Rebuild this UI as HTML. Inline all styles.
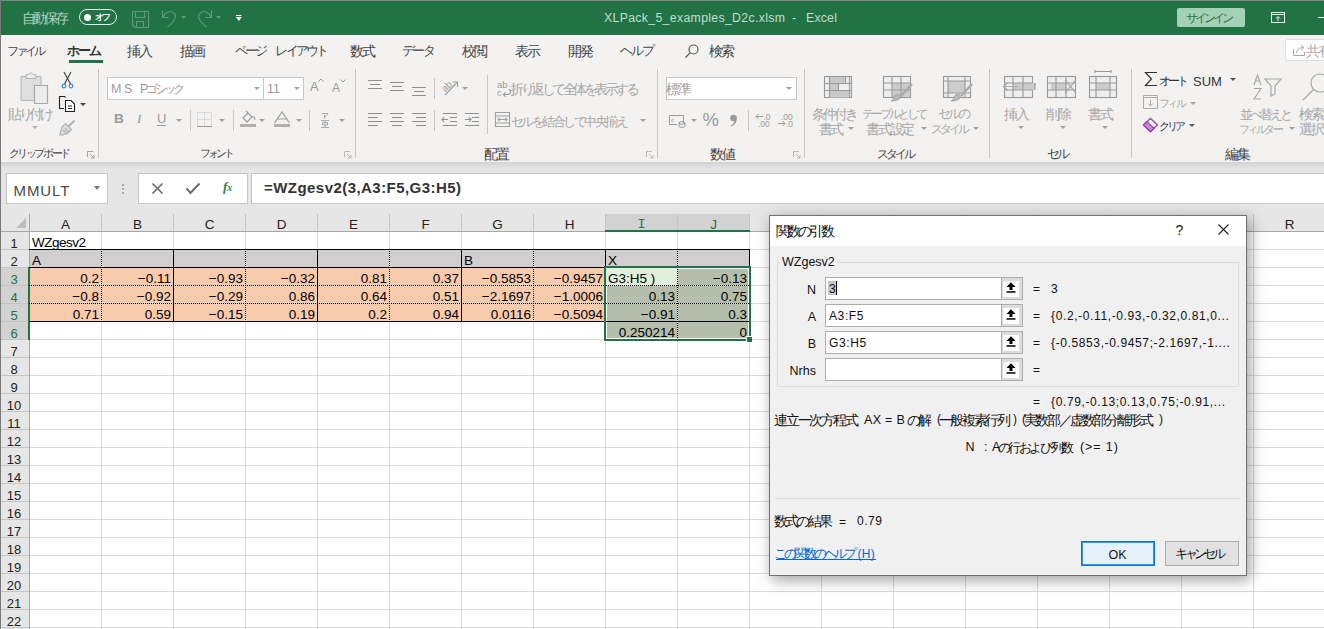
<!DOCTYPE html>
<html><head><meta charset="utf-8">
<style>
*{box-sizing:border-box;}
html,body{margin:0;padding:0;}
body{width:1324px;height:629px;overflow:hidden;position:relative;background:#fff;font-family:"Liberation Sans",sans-serif;}
.a{position:absolute;white-space:nowrap;}
.t{position:absolute;white-space:nowrap;line-height:1;}
#title{left:0;top:0;width:1324px;height:35px;background:#217346;}
#tabs{left:0;top:35px;width:1324px;height:127px;background:#f3f2f1;}
.tab{position:absolute;top:44px;font-size:12.5px;color:#444;line-height:14px;}
.gl{position:absolute;top:147px;font-size:12px;color:#444;line-height:13px;}
.sep{position:absolute;width:1px;background:#c8c6c4;}
.dl{position:absolute;top:151px;width:7px;height:7px;border-left:1px solid #b0b0b0;border-top:1px solid #b0b0b0;}
.rt{position:absolute;font-size:12px;color:#a6a6a6;line-height:13px;}
.ar{position:absolute;width:0;height:0;border-left:3px solid transparent;border-right:3px solid transparent;border-top:3px solid #a0a0a0;}
#fbar{left:0;top:162px;width:1324px;height:52px;background:#e6e6e6;}
.hdr{position:absolute;background:#e6e6e6;}
.ch{position:absolute;top:214px;height:17px;font-size:13.5px;color:#333;text-align:center;line-height:15px;}
.rh{position:absolute;left:0px;width:28px;height:15px;font-size:13px;color:#333;text-align:center;line-height:15px;}
.vl{position:absolute;width:1px;background:#d9d9d9;}
.hl{position:absolute;height:1px;background:#d9d9d9;}
.c{position:absolute;height:17px;font-size:13.5px;line-height:19px;color:#000;}
.n{text-align:right;padding-right:2px;}
.dlg{font-size:12px;color:#111;}
.jc{display:inline-flex;justify-content:center;}
</style></head><body>
<!-- window border -->
<div class="a" style="left:0;top:0;width:1324px;height:1px;background:#858585;z-index:50"></div>
<div class="a" style="left:0;top:0;width:1px;height:629px;background:#7a7a7a;z-index:50"></div>

<!--TOP-->
<div class="a" id="title"></div>
<div class="t" style="left:23px;top:10.5px;font-size:14px;color:#b3d1bd;"><span class="jc" style="width:11.25px">自</span><span class="jc" style="width:11.25px">動</span><span class="jc" style="width:11.25px">保</span><span class="jc" style="width:11.25px">存</span></div>
<div class="a" style="left:79px;top:9px;width:38px;height:16px;border:1.5px solid #e9f1ec;border-radius:8px;"></div>
<div class="a" style="left:84px;top:14px;width:7px;height:7px;border-radius:50%;background:#fff;"></div>
<div class="t" style="left:96px;top:13.0px;font-size:9px;color:#fff;font-weight:bold;"><span class="jc" style="width:6.75px">オ</span><span class="jc" style="width:6.75px">フ</span></div>
<svg class="a" style="left:131px;top:10px" width="19" height="19" viewBox="0 0 19 19" fill="none" stroke="#5f9c77" stroke-width="1.1">
 <path d="M1.5 1.5H17.5V17.5H4L1.5 15Z"/><path d="M4.5 1.5V7.5H13.5V1.5"/><path d="M5.5 17.5V11.5H12.5V17.5"/></svg>
<svg class="a" style="left:160px;top:9px" width="30" height="20" viewBox="0 0 30 20" fill="none" stroke="#5f9c77" stroke-width="1.1">
 <path d="M2.5 1.5V8.5H8.5"/><path d="M2.8 8.2C5.5 3 10.5 1 13.8 4C17 7 15.5 12 7.5 18"/><path d="M21 7H26L23.5 10Z" fill="#5f9c77" stroke="none"/></svg>
<svg class="a" style="left:196px;top:9px" width="30" height="20" viewBox="0 0 30 20" fill="none" stroke="#5f9c77" stroke-width="1.1">
 <path d="M15.5 1.5V8.5H9.5"/><path d="M15.2 8.2C12.5 3 7.5 1 4.2 4C1 7 2.5 12 10.5 18"/><path d="M20 7H25L22.5 10Z" fill="#5f9c77" stroke="none"/></svg>
<svg class="a" style="left:235px;top:14px" width="8" height="8" viewBox="0 0 8 8"><rect x="1" y="1" width="5.5" height="1.1" fill="#fff"/><path d="M0.8 3H6.8L3.8 7Z" fill="#fff"/></svg>
<div class="t" style="left:604px;top:11.5px;font-size:12.3px;color:#c2dfcc;letter-spacing:0.32px;">XLPack_5_examples_D2c.xlsm</div>
<div class="t" style="left:792px;top:11.5px;font-size:12.3px;color:#c2dfcc;">-</div>
<div class="t" style="left:806px;top:11.5px;font-size:12.3px;color:#c2dfcc;letter-spacing:0.2px;">Excel</div>
<div class="a" style="left:1177px;top:8px;width:68px;height:19px;background:#a3d1b5;border-radius:2px;"></div>
<div class="t" style="left:1187px;top:12.0px;font-size:12px;color:#2f6e47;"><span class="jc" style="width:9.00px">サ</span><span class="jc" style="width:9.00px">イ</span><span class="jc" style="width:9.00px">ン</span><span class="jc" style="width:9.00px">イ</span><span class="jc" style="width:9.00px">ン</span></div>
<svg class="a" style="left:1270px;top:11px" width="16" height="13" viewBox="0 0 16 13" fill="none" stroke="#e4efe8" stroke-width="1">
 <rect x="1.5" y="1.5" width="13" height="10"/><path d="M1.5 3.5H14.5"/><path d="M8 10V5.5M6 7.5L8 5.5L10 7.5"/></svg>
<div class="a" style="left:1318px;top:17px;width:6px;height:1px;background:#e4efe8;"></div>
<div class="a" id="tabs"></div>
<div class="t" style="left:8px;top:44.5px;font-size:12px;color:#444;"><span class="jc" style="width:9.00px">フ</span><span class="jc" style="width:9.00px">ァ</span><span class="jc" style="width:9.00px">イ</span><span class="jc" style="width:9.00px">ル</span></div>
<div class="t" style="left:128px;top:43.5px;font-size:14px;color:#444;"><span class="jc" style="width:12.00px">挿</span><span class="jc" style="width:12.00px">入</span></div>
<div class="t" style="left:181px;top:43.5px;font-size:14px;color:#444;"><span class="jc" style="width:12.00px">描</span><span class="jc" style="width:12.00px">画</span></div>
<div class="t" style="left:236px;top:44.0px;font-size:13px;color:#444;"><span class="jc" style="width:10.20px">ペ</span><span class="jc" style="width:10.20px">ー</span><span class="jc" style="width:10.20px">ジ</span><span class="jc" style="width:10.20px"> </span><span class="jc" style="width:10.20px">レ</span><span class="jc" style="width:10.20px">イ</span><span class="jc" style="width:10.20px">ア</span><span class="jc" style="width:10.20px">ウ</span><span class="jc" style="width:10.20px">ト</span></div>
<div class="t" style="left:351px;top:43.5px;font-size:14px;color:#444;"><span class="jc" style="width:12.00px">数</span><span class="jc" style="width:12.00px">式</span></div>
<div class="t" style="left:403px;top:44.0px;font-size:13px;color:#444;"><span class="jc" style="width:10.50px">デ</span><span class="jc" style="width:10.50px">ー</span><span class="jc" style="width:10.50px">タ</span></div>
<div class="t" style="left:463px;top:43.5px;font-size:14px;color:#444;"><span class="jc" style="width:12.00px">校</span><span class="jc" style="width:12.00px">閲</span></div>
<div class="t" style="left:516px;top:43.5px;font-size:14px;color:#444;"><span class="jc" style="width:12.00px">表</span><span class="jc" style="width:12.00px">示</span></div>
<div class="t" style="left:569px;top:43.5px;font-size:14px;color:#444;"><span class="jc" style="width:12.00px">開</span><span class="jc" style="width:12.00px">発</span></div>
<div class="t" style="left:621px;top:44.0px;font-size:13px;color:#444;"><span class="jc" style="width:10.88px">ヘ</span><span class="jc" style="width:10.88px">ル</span><span class="jc" style="width:10.88px">プ</span></div>
<div class="t" style="left:710px;top:43.5px;font-size:14px;color:#444;"><span class="jc" style="width:12.00px">検</span><span class="jc" style="width:12.00px">索</span></div>
<div class="t" style="left:68px;top:44.0px;font-size:13px;color:#333;font-weight:bold;"><span class="jc" style="width:10.88px">ホ</span><span class="jc" style="width:10.88px">ー</span><span class="jc" style="width:10.88px">ム</span></div>
<div class="a" style="left:69px;top:60px;width:34px;height:3px;background:#217346;"></div>
<svg class="a" style="left:684px;top:43px" width="16" height="16" viewBox="0 0 16 16" fill="none" stroke="#555" stroke-width="1.2"><circle cx="9.5" cy="6.5" r="4.5"/><path d="M6.3 9.7L1.5 14.5"/></svg>
<div class="a" style="left:1285px;top:39px;width:45px;height:22px;background:#fff;border:1px solid #e1dfdd;border-radius:2px;"></div>
<svg class="a" style="left:1292px;top:43px" width="15" height="14" viewBox="0 0 15 14" fill="none" stroke="#a8a8a8" stroke-width="1"><path d="M1.5 6V12.5H12.5V9"/><path d="M4.5 10C5 6 8 4.5 11 4.5"/><path d="M9 2L12 4.5L9 7"/></svg>
<div class="t" style="left:1307px;top:43.5px;font-size:14px;color:#a8a8a8;"><span class="jc" style="width:12.00px">共</span><span class="jc" style="width:12.00px">有</span></div>
<div class="sep" style="left:98px;top:69px;height:89px;"></div>
<div class="sep" style="left:355px;top:69px;height:89px;"></div>
<div class="sep" style="left:657px;top:69px;height:89px;"></div>
<div class="sep" style="left:804px;top:69px;height:89px;"></div>
<div class="sep" style="left:989px;top:69px;height:89px;"></div>
<div class="sep" style="left:1131px;top:69px;height:89px;"></div>
<div class="t" style="left:10px;top:147.8px;font-size:11.4px;color:#444;"><span class="jc" style="width:8.55px">ク</span><span class="jc" style="width:8.55px">リ</span><span class="jc" style="width:8.55px">ッ</span><span class="jc" style="width:8.55px">プ</span><span class="jc" style="width:8.55px">ボ</span><span class="jc" style="width:8.55px">ー</span><span class="jc" style="width:8.55px">ド</span></div>
<div class="t" style="left:201px;top:148.0px;font-size:11px;color:#444;"><span class="jc" style="width:8.25px">フ</span><span class="jc" style="width:8.25px">ォ</span><span class="jc" style="width:8.25px">ン</span><span class="jc" style="width:8.25px">ト</span></div>
<div class="t" style="left:485px;top:146.5px;font-size:14px;color:#444;"><span class="jc" style="width:12.00px">配</span><span class="jc" style="width:12.00px">置</span></div>
<div class="t" style="left:711px;top:146.5px;font-size:14px;color:#444;"><span class="jc" style="width:12.00px">数</span><span class="jc" style="width:12.00px">値</span></div>
<div class="t" style="left:878px;top:147.5px;font-size:12px;color:#444;"><span class="jc" style="width:9.00px">ス</span><span class="jc" style="width:9.00px">タ</span><span class="jc" style="width:9.00px">イ</span><span class="jc" style="width:9.00px">ル</span></div>
<div class="t" style="left:1049px;top:147.0px;font-size:13px;color:#444;"><span class="jc" style="width:9.98px">セ</span><span class="jc" style="width:9.98px">ル</span></div>
<div class="t" style="left:1226px;top:146.5px;font-size:14px;color:#444;"><span class="jc" style="width:12.00px">編</span><span class="jc" style="width:12.00px">集</span></div>
<svg class="a" style="left:87px;top:151px" width="8" height="8" viewBox="0 0 8 8" fill="none" stroke="#a0a0a0" stroke-width="1"><path d="M0.5 6V0.5H6"/><path d="M3 3L7 7M7 4V7H4"/></svg>
<svg class="a" style="left:344px;top:151px" width="8" height="8" viewBox="0 0 8 8" fill="none" stroke="#b8b8b8" stroke-width="1"><path d="M0.5 6V0.5H6"/><path d="M3 3L7 7M7 4V7H4"/></svg>
<svg class="a" style="left:646px;top:151px" width="8" height="8" viewBox="0 0 8 8" fill="none" stroke="#b8b8b8" stroke-width="1"><path d="M0.5 6V0.5H6"/><path d="M3 3L7 7M7 4V7H4"/></svg>
<svg class="a" style="left:793px;top:151px" width="8" height="8" viewBox="0 0 8 8" fill="none" stroke="#b8b8b8" stroke-width="1"><path d="M0.5 6V0.5H6"/><path d="M3 3L7 7M7 4V7H4"/></svg>
<svg class="a" style="left:20px;top:72px" width="30" height="33" viewBox="0 0 30 33">
 <path d="M1 4.5H21V28.5H1Z" fill="#dedede" stroke="#b4b4b4" stroke-width="1"/>
 <path d="M6 2.5H9C9 0.5 13 0.5 13 2.5H16V6.5H6Z" fill="#ececec" stroke="#b4b4b4" stroke-width="1"/>
 <path d="M14.5 13.5H27.5V31.5H14.5Z" fill="#ececec" stroke="#a8a8a8" stroke-width="1.2"/></svg>
<div class="t" style="left:10px;top:106.5px;font-size:14px;color:#a6a6a6;"><span class="jc" style="width:10.50px">貼</span><span class="jc" style="width:10.50px">り</span><span class="jc" style="width:10.50px">付</span><span class="jc" style="width:10.50px">け</span></div>
<div class="ar" style="left:31.5px;top:126px;border-left-width:3px;border-right-width:3px;border-top:3px solid #b0b0b0;"></div>
<svg class="a" style="left:61px;top:71px" width="13" height="18" viewBox="0 0 13 18" fill="none" stroke-width="1.2">
 <path d="M3 1L9.5 13M10 1L3.5 13" stroke="#444"/><circle cx="3" cy="15" r="1.8" stroke="#3a8ed6"/><circle cx="10" cy="15" r="1.8" stroke="#3a8ed6"/></svg>
<svg class="a" style="left:58px;top:95px" width="18" height="18" viewBox="0 0 18 18" fill="none" stroke="#222" stroke-width="1.1">
 <path d="M6 13.5H1.5V1.5H6.5L7.5 2.5"/><path d="M7.5 5.5H13L16.5 9V16.5H7.5Z" fill="#fff"/><path d="M10 11H14M10 13.5H14"/></svg>
<div class="ar" style="left:80.0px;top:103px;border-left-width:3.5px;border-right-width:3.5px;border-top:3.5px solid #444;"></div>
<svg class="a" style="left:59px;top:119px" width="17" height="17" viewBox="0 0 17 17" fill="none" stroke="#b0b0b0" stroke-width="1.1">
 <path d="M9.5 7.5L15.5 1.5" stroke-width="1.8"/><path d="M6.5 4.5L12.5 10.5L10 13C8 15 4.5 16 1 16C1.5 12.5 1.5 10 3.5 7.5Z" fill="#dcdcdc"/><path d="M4 11L7 14M6 9.5L9.5 13"/></svg>
<div class="a" style="left:107px;top:77px;width:157px;height:23px;background:#fff;border:1px solid #c8c6c4;"></div>
<div class="t" style="left:111px;top:82.5px;font-size:12.5px;color:#9a9a9a;">M</div>
<div class="t" style="left:124px;top:82.5px;font-size:12.5px;color:#9a9a9a;">S</div>
<div class="t" style="left:140px;top:82.5px;font-size:12.5px;color:#9a9a9a;">P</div>
<div class="t" style="left:148px;top:82.7px;font-size:11.7px;color:#9a9a9a;"><span class="jc" style="width:8.77px">ゴ</span><span class="jc" style="width:8.77px">シ</span><span class="jc" style="width:8.77px">ッ</span><span class="jc" style="width:8.77px">ク</span></div>
<div class="ar" style="left:253.5px;top:87px;border-left-width:3px;border-right-width:3px;border-top:3px solid #a0a0a0;"></div>
<div class="a" style="left:263px;top:77px;width:41px;height:23px;background:#fff;border:1px solid #c8c6c4;"></div>
<div class="t" style="left:267px;top:82.5px;font-size:12.5px;color:#9a9a9a;">11</div>
<div class="ar" style="left:293.5px;top:87px;border-left-width:3px;border-right-width:3px;border-top:3px solid #a0a0a0;"></div>
<div class="t" style="left:310px;top:80.4px;font-size:13px;color:#9a9a9a;">A</div>
<svg class="a" style="left:318px;top:78px" width="6" height="4" viewBox="0 0 6 4" fill="none" stroke="#9a9a9a"><path d="M0.5 3.5L3 1L5.5 3.5"/></svg>
<div class="t" style="left:332px;top:81.6px;font-size:12px;color:#9a9a9a;">A</div>
<svg class="a" style="left:340px;top:79px" width="6" height="4" viewBox="0 0 6 4" fill="none" stroke="#9a9a9a"><path d="M0.5 0.5L3 3L5.5 0.5"/></svg>
<div class="t" style="left:114px;top:112.4px;font-size:13.5px;color:#9a9a9a;font-weight:bold;">B</div>
<div class="t" style="left:137px;top:112.4px;font-size:13.5px;color:#9a9a9a;font-style:italic;font-family:'Liberation Serif',serif;">I</div>
<div class="t" style="left:157px;top:112.4px;font-size:13px;color:#9a9a9a;">U</div>
<div class="a" style="left:157px;top:125px;width:9px;height:1px;background:#9a9a9a;"></div>
<div class="ar" style="left:175.5px;top:119px;border-left-width:3px;border-right-width:3px;border-top:3px solid #a0a0a0;"></div>
<div class="sep" style="left:190px;top:110px;height:21px;"></div>
<svg class="a" style="left:197px;top:112px" width="15" height="15" viewBox="0 0 15 15" fill="none" stroke="#c4c4c4" stroke-width="1" stroke-dasharray="1 1"><path d="M0.5 0.5H14.5V14.5M0.5 0.5V14.5M7.5 0.5V14.5M0.5 7.5H14.5"/></svg>
<div class="a" style="left:197px;top:126px;width:15px;height:1px;background:#999;"></div>
<div class="ar" style="left:218.5px;top:119px;border-left-width:3px;border-right-width:3px;border-top:3px solid #a0a0a0;"></div>
<div class="sep" style="left:233px;top:110px;height:21px;"></div>
<svg class="a" style="left:240px;top:110px" width="17" height="14" viewBox="0 0 17 14" fill="none" stroke="#999" stroke-width="1.1"><path d="M3 8L8 3L12 7L7 12Z"/><path d="M8 3L6 1"/><path d="M12 7C14 6 15 8 15 10"/></svg>
<div class="a" style="left:240px;top:124px;width:16px;height:3px;background:#b3aeab;"></div>
<div class="ar" style="left:259px;top:119px;border-left-width:3px;border-right-width:3px;border-top:3px solid #a0a0a0;"></div>
<svg class="a" style="left:273px;top:111px" width="18" height="13" viewBox="0 0 18 13" fill="none" stroke="#9a9a9a" stroke-width="1.2"><path d="M1.5 12L9 1L16.5 12M4.5 8H13.5"/></svg>
<div class="a" style="left:274px;top:124px;width:16px;height:3px;background:#b3aeab;"></div>
<div class="ar" style="left:295.5px;top:119px;border-left-width:3px;border-right-width:3px;border-top:3px solid #a0a0a0;"></div>
<div class="sep" style="left:309px;top:110px;height:21px;"></div>
<svg class="a" style="left:320px;top:112px" width="10" height="16" viewBox="0 0 10 16" fill="none" stroke="#aaa" stroke-width="1"><path d="M2 1.5H8C7.5 3 6.5 4 5 4.5M4.5 3V6.5"/><path d="M1 8.5H9M2.5 10.5H7.5V13H2.5ZM5 8.5V15.5M1 15.5H9"/></svg>
<div class="ar" style="left:338.5px;top:119px;border-left-width:3px;border-right-width:3px;border-top:3px solid #a0a0a0;"></div>
<svg class="a" style="left:367px;top:78px" width="62" height="20" viewBox="0 0 62 20" stroke="#8f8f8f" stroke-width="1.2">
 <path d="M1 2.5H15M3 6.5H13M1 10.5H15"/><path d="M23 4.5H37M25 8.5H35M23 12.5H37"/><path d="M45 9.5H59M47 13.5H57M45 17.5H59"/></svg>
<svg class="a" style="left:367px;top:111px" width="114" height="17" viewBox="0 0 114 17" stroke="#8f8f8f" stroke-width="1.2">
 <path d="M1 2.5H15M1 6.5H11M1 10.5H15M1 14.5H11"/><path d="M23 2.5H37M25 6.5H35M23 10.5H37M25 14.5H35"/><path d="M45 2.5H59M49 6.5H59M45 10.5H59M49 14.5H59"/>
 <path d="M76 2.5H90M83 6.5H90M83 10.5H90M76 14.5H90M75 8.5H81M77 6L75 8.5L77 11" fill="none"/>
 <path d="M98 2.5H112M105 6.5H112M105 10.5H112M98 14.5H112M98 8.5H104M102 6L104 8.5L102 11" fill="none"/></svg>
<div class="sep" style="left:434px;top:78px;height:21px;"></div>
<div class="sep" style="left:434px;top:110px;height:21px;"></div>
<svg class="a" style="left:441px;top:79px" width="18" height="17" viewBox="0 0 18 17" fill="none" stroke="#a0a0a0" stroke-width="1.1"><text x="0" y="11" font-size="9.5" fill="#9a9a9a" stroke="none" transform="rotate(-45 5 7)" font-family="Liberation Sans">ab</text><path d="M4 16L16 3.5M11.5 3H16.5V8"/></svg>
<div class="ar" style="left:461.5px;top:87px;border-left-width:3px;border-right-width:3px;border-top:3px solid #a0a0a0;"></div>
<div class="sep" style="left:487px;top:75px;height:59px;"></div>
<svg class="a" style="left:496px;top:80px" width="17" height="17" viewBox="0 0 17 17"><text x="1" y="8" font-size="9.5" fill="#9a9a9a" font-family="Liberation Sans">ab</text><text x="1" y="15.5" font-size="9.5" fill="#9a9a9a" font-family="Liberation Sans">c</text><path d="M12.5 9.5C15.5 10 15.5 14.5 11 14.5H7.5M9.5 12.3L7.3 14.5L9.5 16.7" fill="none" stroke="#9a9a9a" stroke-width="1.1"/></svg>
<div class="t" style="left:512px;top:82.0px;font-size:14px;color:#a6a6a6;"><span class="jc" style="width:10.50px">折</span><span class="jc" style="width:10.50px">り</span><span class="jc" style="width:10.50px">返</span><span class="jc" style="width:10.50px">し</span><span class="jc" style="width:10.50px">て</span><span class="jc" style="width:10.50px">全</span><span class="jc" style="width:10.50px">体</span><span class="jc" style="width:10.50px">を</span><span class="jc" style="width:10.50px">表</span><span class="jc" style="width:10.50px">示</span><span class="jc" style="width:10.50px">す</span><span class="jc" style="width:10.50px">る</span></div>
<svg class="a" style="left:494px;top:111px" width="17" height="17" viewBox="0 0 17 17" fill="none" stroke="#a0a0a0" stroke-width="1.1"><path d="M1.5 1.5H15.5V15.5H1.5ZM1.5 5H15.5M1.5 12H15.5"/><path d="M4 8.5H13M5.5 7L4 8.5L5.5 10M11.5 7L13 8.5L11.5 10"/></svg>
<div class="t" style="left:512px;top:115.2px;font-size:13px;color:#a6a6a6;"><span class="jc" style="width:10.50px">セ</span><span class="jc" style="width:10.50px">ル</span><span class="jc" style="width:10.50px">を</span><span class="jc" style="width:10.50px">結</span><span class="jc" style="width:10.50px">合</span><span class="jc" style="width:10.50px">し</span><span class="jc" style="width:10.50px">て</span><span class="jc" style="width:10.50px">中</span><span class="jc" style="width:10.50px">央</span><span class="jc" style="width:10.50px">揃</span><span class="jc" style="width:10.50px">え</span></div>
<div class="ar" style="left:639.5px;top:119px;border-left-width:3px;border-right-width:3px;border-top:3px solid #a0a0a0;"></div>
<div class="a" style="left:666px;top:77px;width:131px;height:23px;background:#fff;border:1px solid #c8c6c4;"></div>
<div class="t" style="left:667px;top:81.5px;font-size:14px;color:#9a9a9a;"><span class="jc" style="width:11.70px">標</span><span class="jc" style="width:11.70px">準</span></div>
<div class="ar" style="left:785.5px;top:87px;border-left-width:3px;border-right-width:3px;border-top:3px solid #a0a0a0;"></div>
<svg class="a" style="left:668px;top:114px" width="18" height="14" viewBox="0 0 18 14" fill="none" stroke="#9a9a9a" stroke-width="1"><path d="M1.5 1.5H15.5V9M1.5 1.5V10.5H9"/><text x="3" y="8" font-size="6" fill="#9a9a9a" stroke="none" font-family="Liberation Sans">c</text><ellipse cx="14" cy="9" rx="3" ry="1.3"/><path d="M11 9V12.5C11 13.5 17 13.5 17 12.5V9"/></svg>
<div class="ar" style="left:690.5px;top:119px;border-left-width:3px;border-right-width:3px;border-top:3px solid #a0a0a0;"></div>
<div class="t" style="left:702.5px;top:110.8px;font-size:18.5px;color:#9a9a9a;">%</div>
<svg class="a" style="left:729px;top:114px" width="9" height="13" viewBox="0 0 9 13"><circle cx="4.5" cy="4" r="3.3" fill="#9a9a9a"/><path d="M7.6 4.5C7.8 8 6 11 2 12.5L1.6 11.6C4.3 10.2 5.6 8.3 5.2 6.5Z" fill="#9a9a9a"/></svg>
<div class="sep" style="left:748px;top:110px;height:21px;"></div>
<svg class="a" style="left:755px;top:112px" width="40" height="16" viewBox="0 0 40 16" fill="none" stroke="#9a9a9a" stroke-width="1"><path d="M1 4.5H8M3.5 2L1 4.5L3.5 7"/><text x="8.5" y="8" font-size="8.5" fill="#9a9a9a" stroke="none" font-family="Liberation Sans">.0</text><text x="3" y="15" font-size="8.5" fill="#9a9a9a" stroke="none" font-family="Liberation Sans">.00</text><text x="26" y="8" font-size="8.5" fill="#9a9a9a" stroke="none" font-family="Liberation Sans">.00</text><path d="M23 11.5H30M27.5 9L30 11.5L27.5 14"/><text x="31" y="15" font-size="8.5" fill="#9a9a9a" stroke="none" font-family="Liberation Sans">.0</text></svg>
<svg class="a" style="left:823px;top:75px" width="30" height="24" viewBox="0 0 30 24" stroke="#999" stroke-width="1.1">
 <rect x="1.5" y="1.5" width="27" height="21" fill="#efefef"/><rect x="6.5" y="2" width="16" height="6.5" fill="#c9c9c9" stroke="none"/><rect x="6.5" y="8.5" width="9" height="7" fill="#c9c9c9" stroke="none"/><rect x="6.5" y="15.5" width="20" height="7" fill="#c9c9c9" stroke="none"/>
 <path d="M6.5 1.5V22.5M22.5 1.5V8.5M26.5 1.5V22.5M15.5 8.5V15.5M1.5 8.5H28.5M1.5 15.5H28.5" fill="none"/></svg>
<div class="t" style="left:813px;top:106.6px;font-size:14px;color:#a6a6a6;"><span class="jc" style="width:11.25px">条</span><span class="jc" style="width:11.25px">件</span><span class="jc" style="width:11.25px">付</span><span class="jc" style="width:11.25px">き</span></div>
<div class="t" style="left:820px;top:121.5px;font-size:14px;color:#a6a6a6;"><span class="jc" style="width:11.25px">書</span><span class="jc" style="width:11.25px">式</span></div>
<div class="ar" style="left:848px;top:127px;border-left-width:3px;border-right-width:3px;border-top:3px solid #a0a0a0;"></div>
<svg class="a" style="left:882px;top:75px" width="32" height="28" viewBox="0 0 32 28" stroke="#999" stroke-width="1.1">
 <rect x="1.5" y="1.5" width="27" height="21" fill="#eee"/><rect x="10" y="8" width="18" height="14" fill="#ccc" stroke="none"/>
 <path d="M10 1.5V22.5M19 1.5V22.5M1.5 8H28.5M1.5 15H28.5" fill="none"/>
 <path d="M30 9L19 21" stroke="#aaa" stroke-width="2.5"/><path d="M13 21C15 18 19 19 18 22C17 25 12 26 9 26C12 25 11 23 13 21Z" fill="#bbb" stroke="#aaa"/></svg>
<div class="t" style="left:863px;top:107.5px;font-size:12.2px;color:#a6a6a6;"><span class="jc" style="width:9.15px">テ</span><span class="jc" style="width:9.15px">ー</span><span class="jc" style="width:9.15px">ブ</span><span class="jc" style="width:9.15px">ル</span><span class="jc" style="width:9.15px">と</span><span class="jc" style="width:9.15px">し</span><span class="jc" style="width:9.15px">て</span></div>
<div class="t" style="left:867px;top:121.5px;font-size:14px;color:#a6a6a6;"><span class="jc" style="width:11.85px">書</span><span class="jc" style="width:11.85px">式</span><span class="jc" style="width:11.85px">設</span><span class="jc" style="width:11.85px">定</span></div>
<div class="ar" style="left:921px;top:127px;border-left-width:3px;border-right-width:3px;border-top:3px solid #a0a0a0;"></div>
<svg class="a" style="left:942px;top:75px" width="32" height="28" viewBox="0 0 32 28" stroke="#999" stroke-width="1.1">
 <rect x="1.5" y="1.5" width="27" height="21" fill="#eee"/><rect x="6" y="6" width="17" height="12" fill="#ccc" stroke="none"/>
 <path d="M6 1.5V22.5M23 1.5V22.5M1.5 6H28.5M1.5 18H28.5" fill="none"/>
 <path d="M30 9L19 21" stroke="#aaa" stroke-width="2.5"/><path d="M13 21C15 18 19 19 18 22C17 25 12 26 9 26C12 25 11 23 13 21Z" fill="#bbb" stroke="#aaa"/></svg>
<div class="t" style="left:940px;top:107.1px;font-size:13px;color:#a6a6a6;"><span class="jc" style="width:9.98px">セ</span><span class="jc" style="width:9.98px">ル</span><span class="jc" style="width:9.98px">の</span></div>
<div class="t" style="left:932px;top:122.5px;font-size:12px;color:#a6a6a6;"><span class="jc" style="width:9.00px">ス</span><span class="jc" style="width:9.00px">タ</span><span class="jc" style="width:9.00px">イ</span><span class="jc" style="width:9.00px">ル</span></div>
<div class="ar" style="left:973px;top:127px;border-left-width:3px;border-right-width:3px;border-top:3px solid #a0a0a0;"></div>
<svg class="a" style="left:1002px;top:75px" width="34" height="24" viewBox="0 0 34 24" stroke="#999" stroke-width="1.1">
 <rect x="2.5" y="1.5" width="28" height="21" fill="#eee"/><rect x="11" y="8" width="22" height="7" fill="#ccc" stroke="none"/>
 <path d="M11 1.5V22.5M21 1.5V22.5M2.5 8H30.5M2.5 15H30.5M33 8V15" fill="none"/>
 <path d="M16 11.5H2M6 7.5L1.5 11.5L6 15.5" fill="none" stroke="#aaa" stroke-width="1.2"/></svg>
<div class="t" style="left:1005px;top:107.0px;font-size:14px;color:#a6a6a6;"><span class="jc" style="width:12.00px">挿</span><span class="jc" style="width:12.00px">入</span></div>
<div class="ar" style="left:1017.5px;top:126px;border-left-width:3px;border-right-width:3px;border-top:3px solid #a0a0a0;"></div>
<svg class="a" style="left:1046px;top:75px" width="32" height="24" viewBox="0 0 32 24" stroke="#999" stroke-width="1.1">
 <rect x="1.5" y="1.5" width="28" height="21" fill="#eee"/><rect x="5" y="8" width="16" height="7" fill="#ccc" stroke="none"/>
 <path d="M10 1.5V22.5M20 1.5V22.5M1.5 8H29.5M1.5 15H29.5" fill="none"/>
 <path d="M19 5L30 18M30 5L19 18" stroke="#aaa" stroke-width="1.2"/></svg>
<div class="t" style="left:1047px;top:107.0px;font-size:14px;color:#a6a6a6;"><span class="jc" style="width:12.00px">削</span><span class="jc" style="width:12.00px">除</span></div>
<div class="ar" style="left:1059.5px;top:126px;border-left-width:3px;border-right-width:3px;border-top:3px solid #a0a0a0;"></div>
<svg class="a" style="left:1088px;top:70px" width="30" height="29" viewBox="0 0 30 29" stroke="#999" stroke-width="1.1">
 <path d="M7 1.5H23M7 0V3M23 0V3" fill="none"/>
 <rect x="1.5" y="6.5" width="27" height="21" fill="#eee"/><rect x="8" y="13" width="14" height="7" fill="#ccc" stroke="none"/>
 <path d="M8 6.5V27.5M22 6.5V27.5M1.5 13H28.5M1.5 20H28.5" fill="none"/></svg>
<div class="t" style="left:1089px;top:107.0px;font-size:14px;color:#a6a6a6;"><span class="jc" style="width:12.00px">書</span><span class="jc" style="width:12.00px">式</span></div>
<div class="ar" style="left:1101.5px;top:126px;border-left-width:3px;border-right-width:3px;border-top:3px solid #a0a0a0;"></div>
<svg class="a" style="left:1144px;top:71px" width="14" height="16" viewBox="0 0 14 16" fill="none" stroke="#333" stroke-width="1.2"><path d="M13 1.5H1.5L7.5 8L1.5 14.5H13"/></svg>
<div class="t" style="left:1160px;top:74.7px;font-size:12px;color:#333;"><span class="jc" style="width:9.00px">オ</span><span class="jc" style="width:9.00px">ー</span><span class="jc" style="width:9.00px">ト</span></div>
<div class="t" style="left:1193px;top:75.4px;font-size:13px;color:#333;">SUM</div>
<div class="ar" style="left:1229.5px;top:78px;border-left-width:3px;border-right-width:3px;border-top:3px solid #555;"></div>
<svg class="a" style="left:1142px;top:94px" width="17" height="16" viewBox="0 0 17 16" fill="none" stroke="#aaa" stroke-width="1"><path d="M1.5 1.5H15.5V14.5H1.5ZM1.5 3.5H15.5"/><path d="M8.5 6V12M6 9.5L8.5 12L11 9.5"/></svg>
<div class="t" style="left:1160px;top:98.2px;font-size:11.3px;color:#a6a6a6;"><span class="jc" style="width:8.48px">フ</span><span class="jc" style="width:8.48px">ィ</span><span class="jc" style="width:8.48px">ル</span></div>
<div class="ar" style="left:1190px;top:102px;border-left-width:3px;border-right-width:3px;border-top:3px solid #a0a0a0;"></div>
<svg class="a" style="left:1142px;top:117px" width="17" height="16" viewBox="0 0 17 16" stroke="#9b3fb0" stroke-width="1.3"><path d="M8.5 1.5L15.5 8L8.5 14.5L1.5 8Z" fill="#fff"/><path d="M5 4.75L12 11.25L8.5 14.5L1.5 8Z" fill="#c58fd3"/></svg>
<div class="t" style="left:1160px;top:120.6px;font-size:10.8px;color:#333;"><span class="jc" style="width:8.10px">ク</span><span class="jc" style="width:8.10px">リ</span><span class="jc" style="width:8.10px">ア</span></div>
<div class="ar" style="left:1189px;top:124px;border-left-width:3px;border-right-width:3px;border-top:3px solid #555;"></div>
<svg class="a" style="left:1252px;top:73px" width="32" height="28" viewBox="0 0 32 28" fill="none" stroke="#a8a8a8" stroke-width="1.2">
 <path d="M2 12L5.5 2L9 12M3.3 8H7.7"/><path d="M2 15.5H9L2 26H9"/><path d="M13 6H29L23 13V21L19 23V13Z"/></svg>
<div class="t" style="left:1241px;top:107.7px;font-size:13px;color:#a6a6a6;"><span class="jc" style="width:10.12px">並</span><span class="jc" style="width:10.12px">べ</span><span class="jc" style="width:10.12px">替</span><span class="jc" style="width:10.12px">え</span><span class="jc" style="width:10.12px">と</span></div>
<div class="t" style="left:1240px;top:123.5px;font-size:11.3px;color:#a6a6a6;"><span class="jc" style="width:8.48px">フ</span><span class="jc" style="width:8.48px">ィ</span><span class="jc" style="width:8.48px">ル</span><span class="jc" style="width:8.48px">タ</span><span class="jc" style="width:8.48px">ー</span></div>
<div class="ar" style="left:1288.5px;top:127px;border-left-width:3px;border-right-width:3px;border-top:3px solid #a0a0a0;"></div>
<svg class="a" style="left:1300px;top:70px" width="24" height="32" viewBox="0 0 24 32" fill="none" stroke="#a8a8a8" stroke-width="1.2"><circle cx="20" cy="13" r="9"/><path d="M13.5 19.5L3 30"/></svg>
<div class="t" style="left:1300px;top:107.2px;font-size:14px;color:#a6a6a6;"><span class="jc" style="width:12.00px">検</span><span class="jc" style="width:12.00px">索</span><span class="jc" style="width:12.00px">と</span></div>
<div class="t" style="left:1300px;top:122.2px;font-size:14px;color:#a6a6a6;"><span class="jc" style="width:12.00px">選</span><span class="jc" style="width:12.00px">択</span></div>
<!--/TOP-->
<!--FBAR-->
<div class="a" id="fbar"></div>
<div class="a" style="left:0;top:162px;width:1324px;height:7px;background:linear-gradient(#d2d2d2,#e6e6e6);"></div>
<div class="a" style="left:6px;top:173px;width:102px;height:31px;background:#fff;border:1px solid #c6c6c6;"></div>
<div class="t" style="left:13.5px;top:183.2px;font-size:15px;color:#4a4a4a;letter-spacing:0.9px;">MMULT</div>
<div class="ar" style="left:94px;top:186px;border-top:4px solid #777;border-left-width:3.5px;border-right-width:3.5px;"></div>
<div class="a" style="left:122px;top:184px;width:2px;height:2px;background:#aaa;"></div>
<div class="a" style="left:122px;top:188px;width:2px;height:2px;background:#aaa;"></div>
<div class="a" style="left:122px;top:192px;width:2px;height:2px;background:#aaa;"></div>
<div class="a" style="left:138px;top:173px;width:110px;height:31px;background:#fff;border:1px solid #c6c6c6;"></div>
<svg class="a" style="left:151px;top:182px" width="13" height="13" viewBox="0 0 13 13" stroke="#6e6e6e" stroke-width="1.7"><path d="M1.5 1.5L11.5 11.5M11.5 1.5L1.5 11.5"/></svg>
<svg class="a" style="left:185px;top:182px" width="16" height="13" viewBox="0 0 16 13" fill="none" stroke="#6e6e6e" stroke-width="2"><path d="M1.5 6.5L5.5 11L14.5 1.5"/></svg>
<div class="t" style="left:223px;top:180px;font-size:13px;color:#2e7d4a;font-style:italic;font-weight:bold;font-family:'Liberation Serif',serif;">f<span style="font-size:10px">x</span></div>
<div class="a" style="left:251px;top:173px;width:1080px;height:31px;background:#fff;border:1px solid #c6c6c6;"></div>
<div class="t" style="left:264px;top:180.2px;font-size:15px;color:#333;font-weight:bold;letter-spacing:0.45px;">=WZgesv2(3,A3:F5,G3:H5)</div>
<!--/FBAR-->
<!-- GRID -->
<!--GRID-->
<div class="hdr" style="left:1px;top:214px;width:1323px;height:17px;"></div>
<div class="hdr" style="left:1px;top:231px;width:28px;height:398px;"></div>
<svg class="a" style="left:16px;top:218px" width="11" height="11" viewBox="0 0 11 11"><path d="M10 0V10H0Z" fill="#bdbdbd"/></svg>
<div class="a" style="left:605px;top:214px;width:144px;height:17px;background:#d2d2d2;"></div>
<div class="a" style="left:1px;top:267px;width:28px;height:72px;background:#d2d2d2;"></div>
<div class="ch" style="left:30px;top:217px;width:71px;color:#222;">A</div>
<div class="ch" style="left:102px;top:217px;width:71px;color:#222;">B</div>
<div class="ch" style="left:174px;top:217px;width:71px;color:#222;">C</div>
<div class="ch" style="left:246px;top:217px;width:71px;color:#222;">D</div>
<div class="ch" style="left:318px;top:217px;width:71px;color:#222;">E</div>
<div class="ch" style="left:390px;top:217px;width:71px;color:#222;">F</div>
<div class="ch" style="left:462px;top:217px;width:71px;color:#222;">G</div>
<div class="ch" style="left:534px;top:217px;width:71px;color:#222;">H</div>
<div class="ch" style="left:606px;top:217px;width:71px;color:#217346;font-family:'Liberation Mono',monospace;">I</div>
<div class="ch" style="left:678px;top:217px;width:71px;color:#217346;">J</div>
<div class="ch" style="left:750px;top:217px;width:71px;color:#222;">K</div>
<div class="ch" style="left:822px;top:217px;width:71px;color:#222;">L</div>
<div class="ch" style="left:894px;top:217px;width:71px;color:#222;">M</div>
<div class="ch" style="left:966px;top:217px;width:71px;color:#222;">N</div>
<div class="ch" style="left:1038px;top:217px;width:71px;color:#222;">O</div>
<div class="ch" style="left:1110px;top:217px;width:71px;color:#222;">P</div>
<div class="ch" style="left:1182px;top:217px;width:71px;color:#222;">Q</div>
<div class="ch" style="left:1254px;top:217px;width:71px;color:#222;">R</div>
<div class="a" style="left:29px;top:214px;width:1px;height:17px;background:#c4c4c4;"></div>
<div class="a" style="left:101px;top:214px;width:1px;height:17px;background:#c4c4c4;"></div>
<div class="a" style="left:173px;top:214px;width:1px;height:17px;background:#c4c4c4;"></div>
<div class="a" style="left:245px;top:214px;width:1px;height:17px;background:#c4c4c4;"></div>
<div class="a" style="left:317px;top:214px;width:1px;height:17px;background:#c4c4c4;"></div>
<div class="a" style="left:389px;top:214px;width:1px;height:17px;background:#c4c4c4;"></div>
<div class="a" style="left:461px;top:214px;width:1px;height:17px;background:#c4c4c4;"></div>
<div class="a" style="left:533px;top:214px;width:1px;height:17px;background:#c4c4c4;"></div>
<div class="a" style="left:605px;top:214px;width:1px;height:17px;background:#c4c4c4;"></div>
<div class="a" style="left:677px;top:214px;width:1px;height:17px;background:#c4c4c4;"></div>
<div class="a" style="left:749px;top:214px;width:1px;height:17px;background:#c4c4c4;"></div>
<div class="a" style="left:821px;top:214px;width:1px;height:17px;background:#c4c4c4;"></div>
<div class="a" style="left:893px;top:214px;width:1px;height:17px;background:#c4c4c4;"></div>
<div class="a" style="left:965px;top:214px;width:1px;height:17px;background:#c4c4c4;"></div>
<div class="a" style="left:1037px;top:214px;width:1px;height:17px;background:#c4c4c4;"></div>
<div class="a" style="left:1109px;top:214px;width:1px;height:17px;background:#c4c4c4;"></div>
<div class="a" style="left:1181px;top:214px;width:1px;height:17px;background:#c4c4c4;"></div>
<div class="a" style="left:1253px;top:214px;width:1px;height:17px;background:#c4c4c4;"></div>
<div class="a" style="left:1325px;top:214px;width:1px;height:17px;background:#c4c4c4;"></div>
<div class="a" style="left:1px;top:231px;width:1323px;height:1px;background:#a6a6a6;"></div>
<div class="a" style="left:605px;top:230px;width:145px;height:2px;background:#217346;"></div>
<div class="a" style="left:29px;top:214px;width:1px;height:415px;background:#a6a6a6;"></div>
<div class="rh" style="top:236px;color:#222">1</div>
<div class="a" style="left:1px;top:249px;width:28px;height:1px;background:#c4c4c4;"></div>
<div class="rh" style="top:254px;color:#222">2</div>
<div class="a" style="left:1px;top:267px;width:28px;height:1px;background:#c4c4c4;"></div>
<div class="rh" style="top:272px;color:#217346">3</div>
<div class="a" style="left:1px;top:285px;width:28px;height:1px;background:#c4c4c4;"></div>
<div class="rh" style="top:290px;color:#217346">4</div>
<div class="a" style="left:1px;top:303px;width:28px;height:1px;background:#c4c4c4;"></div>
<div class="rh" style="top:308px;color:#217346">5</div>
<div class="a" style="left:1px;top:321px;width:28px;height:1px;background:#c4c4c4;"></div>
<div class="rh" style="top:326px;color:#217346">6</div>
<div class="a" style="left:1px;top:339px;width:28px;height:1px;background:#c4c4c4;"></div>
<div class="rh" style="top:344px;color:#222">7</div>
<div class="a" style="left:1px;top:357px;width:28px;height:1px;background:#c4c4c4;"></div>
<div class="rh" style="top:362px;color:#222">8</div>
<div class="a" style="left:1px;top:375px;width:28px;height:1px;background:#c4c4c4;"></div>
<div class="rh" style="top:380px;color:#222">9</div>
<div class="a" style="left:1px;top:393px;width:28px;height:1px;background:#c4c4c4;"></div>
<div class="rh" style="top:398px;color:#222">10</div>
<div class="a" style="left:1px;top:411px;width:28px;height:1px;background:#c4c4c4;"></div>
<div class="rh" style="top:416px;color:#222">11</div>
<div class="a" style="left:1px;top:429px;width:28px;height:1px;background:#c4c4c4;"></div>
<div class="rh" style="top:434px;color:#222">12</div>
<div class="a" style="left:1px;top:447px;width:28px;height:1px;background:#c4c4c4;"></div>
<div class="rh" style="top:452px;color:#222">13</div>
<div class="a" style="left:1px;top:465px;width:28px;height:1px;background:#c4c4c4;"></div>
<div class="rh" style="top:470px;color:#222">14</div>
<div class="a" style="left:1px;top:483px;width:28px;height:1px;background:#c4c4c4;"></div>
<div class="rh" style="top:488px;color:#222">15</div>
<div class="a" style="left:1px;top:501px;width:28px;height:1px;background:#c4c4c4;"></div>
<div class="rh" style="top:506px;color:#222">16</div>
<div class="a" style="left:1px;top:519px;width:28px;height:1px;background:#c4c4c4;"></div>
<div class="rh" style="top:524px;color:#222">17</div>
<div class="a" style="left:1px;top:537px;width:28px;height:1px;background:#c4c4c4;"></div>
<div class="rh" style="top:542px;color:#222">18</div>
<div class="a" style="left:1px;top:555px;width:28px;height:1px;background:#c4c4c4;"></div>
<div class="rh" style="top:560px;color:#222">19</div>
<div class="a" style="left:1px;top:573px;width:28px;height:1px;background:#c4c4c4;"></div>
<div class="rh" style="top:578px;color:#222">20</div>
<div class="a" style="left:1px;top:591px;width:28px;height:1px;background:#c4c4c4;"></div>
<div class="rh" style="top:596px;color:#222">21</div>
<div class="a" style="left:1px;top:609px;width:28px;height:1px;background:#c4c4c4;"></div>
<div class="rh" style="top:614px;color:#222">22</div>
<div class="a" style="left:1px;top:627px;width:28px;height:1px;background:#c4c4c4;"></div>
<div class="a" style="left:28px;top:267px;width:2px;height:73px;background:#217346;"></div>
<div class="a" style="left:30px;top:250px;width:720px;height:17px;background:#d0cece;"></div>
<div class="a" style="left:30px;top:268px;width:576px;height:53px;background:#f8cbad;"></div>
<div class="a" style="left:606px;top:268px;width:143px;height:71px;background:#fff;"></div>
<div class="a" style="left:607px;top:269px;width:141px;height:69px;background:#b4beab;"></div>
<div class="a" style="left:606px;top:268px;width:71px;height:17px;background:#e2efda;"></div>
<div class="vl" style="left:101px;top:232px;height:397px;"></div>
<div class="vl" style="left:173px;top:232px;height:397px;"></div>
<div class="vl" style="left:245px;top:232px;height:397px;"></div>
<div class="vl" style="left:317px;top:232px;height:397px;"></div>
<div class="vl" style="left:389px;top:232px;height:397px;"></div>
<div class="vl" style="left:461px;top:232px;height:397px;"></div>
<div class="vl" style="left:533px;top:232px;height:397px;"></div>
<div class="vl" style="left:605px;top:232px;height:397px;"></div>
<div class="vl" style="left:677px;top:232px;height:397px;"></div>
<div class="vl" style="left:749px;top:232px;height:397px;"></div>
<div class="vl" style="left:821px;top:232px;height:397px;"></div>
<div class="vl" style="left:893px;top:232px;height:397px;"></div>
<div class="vl" style="left:965px;top:232px;height:397px;"></div>
<div class="vl" style="left:1037px;top:232px;height:397px;"></div>
<div class="vl" style="left:1109px;top:232px;height:397px;"></div>
<div class="vl" style="left:1181px;top:232px;height:397px;"></div>
<div class="vl" style="left:1253px;top:232px;height:397px;"></div>
<div class="vl" style="left:1325px;top:232px;height:397px;"></div>
<div class="hl" style="left:30px;top:249px;width:1294px;"></div>
<div class="hl" style="left:30px;top:267px;width:1294px;"></div>
<div class="hl" style="left:30px;top:285px;width:1294px;"></div>
<div class="hl" style="left:30px;top:303px;width:1294px;"></div>
<div class="hl" style="left:30px;top:321px;width:1294px;"></div>
<div class="hl" style="left:30px;top:339px;width:1294px;"></div>
<div class="hl" style="left:30px;top:357px;width:1294px;"></div>
<div class="hl" style="left:30px;top:375px;width:1294px;"></div>
<div class="hl" style="left:30px;top:393px;width:1294px;"></div>
<div class="hl" style="left:30px;top:411px;width:1294px;"></div>
<div class="hl" style="left:30px;top:429px;width:1294px;"></div>
<div class="hl" style="left:30px;top:447px;width:1294px;"></div>
<div class="hl" style="left:30px;top:465px;width:1294px;"></div>
<div class="hl" style="left:30px;top:483px;width:1294px;"></div>
<div class="hl" style="left:30px;top:501px;width:1294px;"></div>
<div class="hl" style="left:30px;top:519px;width:1294px;"></div>
<div class="hl" style="left:30px;top:537px;width:1294px;"></div>
<div class="hl" style="left:30px;top:555px;width:1294px;"></div>
<div class="hl" style="left:30px;top:573px;width:1294px;"></div>
<div class="hl" style="left:30px;top:591px;width:1294px;"></div>
<div class="hl" style="left:30px;top:609px;width:1294px;"></div>
<div class="hl" style="left:30px;top:627px;width:1294px;"></div>
<div class="a" style="left:29px;top:249px;width:721px;height:1px;background:#000;"></div>
<div class="a" style="left:29px;top:267px;width:721px;height:1px;background:#000;"></div>
<div class="a" style="left:29px;top:285px;width:577px;height:1px;background:repeating-linear-gradient(90deg,#000 0 1px,transparent 1px 2px);"></div>
<div class="a" style="left:606px;top:285px;width:144px;height:1px;background:repeating-linear-gradient(90deg,#000 0 1px,transparent 1px 2px);"></div>
<div class="a" style="left:29px;top:303px;width:577px;height:1px;background:repeating-linear-gradient(90deg,#000 0 1px,transparent 1px 2px);"></div>
<div class="a" style="left:606px;top:303px;width:144px;height:1px;background:repeating-linear-gradient(90deg,#000 0 1px,transparent 1px 2px);"></div>
<div class="a" style="left:29px;top:321px;width:721px;height:1px;background:#000;"></div>
<div class="a" style="left:606px;top:339px;width:144px;height:1px;background:#000;"></div>
<div class="a" style="left:101px;top:249px;width:1px;height:73px;background:repeating-linear-gradient(180deg,#000 0 1px,transparent 1px 2px);"></div>
<div class="a" style="left:173px;top:249px;width:1px;height:73px;background:#000;"></div>
<div class="a" style="left:245px;top:249px;width:1px;height:73px;background:repeating-linear-gradient(180deg,#000 0 1px,transparent 1px 2px);"></div>
<div class="a" style="left:317px;top:249px;width:1px;height:73px;background:#000;"></div>
<div class="a" style="left:389px;top:249px;width:1px;height:73px;background:repeating-linear-gradient(180deg,#000 0 1px,transparent 1px 2px);"></div>
<div class="a" style="left:461px;top:249px;width:1px;height:73px;background:#000;"></div>
<div class="a" style="left:533px;top:249px;width:1px;height:73px;background:repeating-linear-gradient(180deg,#000 0 1px,transparent 1px 2px);"></div>
<div class="a" style="left:605px;top:249px;width:1px;height:73px;background:#000;"></div>
<div class="a" style="left:677px;top:249px;width:1px;height:73px;background:repeating-linear-gradient(180deg,#000 0 1px,transparent 1px 2px);"></div>
<div class="a" style="left:749px;top:249px;width:1px;height:73px;background:#000;"></div>
<div class="a" style="left:605px;top:321px;width:1px;height:19px;background:#000;"></div>
<div class="a" style="left:677px;top:321px;width:1px;height:19px;background:repeating-linear-gradient(180deg,#000 0 1px,transparent 1px 2px);"></div>
<div class="a" style="left:749px;top:321px;width:1px;height:19px;background:#000;"></div>
<div class="c" style="left:30px;top:233px;width:71px;padding-left:2px;letter-spacing:-0.5px;">WZgesv2</div>
<div class="c" style="left:30px;top:251px;width:71px;padding-left:2px;">A</div>
<div class="c" style="left:462px;top:251px;width:71px;padding-left:2px;">B</div>
<div class="c" style="left:606px;top:251px;width:71px;padding-left:2px;">X</div>
<div class="c n" style="left:30px;top:269px;width:71px;">0.2</div>
<div class="c n" style="left:102px;top:269px;width:71px;">−0.11</div>
<div class="c n" style="left:174px;top:269px;width:71px;">−0.93</div>
<div class="c n" style="left:246px;top:269px;width:71px;">−0.32</div>
<div class="c n" style="left:318px;top:269px;width:71px;">0.81</div>
<div class="c n" style="left:390px;top:269px;width:71px;">0.37</div>
<div class="c n" style="left:462px;top:269px;width:71px;">−0.5853</div>
<div class="c n" style="left:534px;top:269px;width:71px;">−0.9457</div>
<div class="c n" style="left:678px;top:269px;width:71px;">−0.13</div>
<div class="c n" style="left:30px;top:287px;width:71px;">−0.8</div>
<div class="c n" style="left:102px;top:287px;width:71px;">−0.92</div>
<div class="c n" style="left:174px;top:287px;width:71px;">−0.29</div>
<div class="c n" style="left:246px;top:287px;width:71px;">0.86</div>
<div class="c n" style="left:318px;top:287px;width:71px;">0.64</div>
<div class="c n" style="left:390px;top:287px;width:71px;">0.51</div>
<div class="c n" style="left:462px;top:287px;width:71px;">−2.1697</div>
<div class="c n" style="left:534px;top:287px;width:71px;">−1.0006</div>
<div class="c n" style="left:606px;top:287px;width:71px;">0.13</div>
<div class="c n" style="left:678px;top:287px;width:71px;">0.75</div>
<div class="c n" style="left:30px;top:305px;width:71px;">0.71</div>
<div class="c n" style="left:102px;top:305px;width:71px;">0.59</div>
<div class="c n" style="left:174px;top:305px;width:71px;">−0.15</div>
<div class="c n" style="left:246px;top:305px;width:71px;">0.19</div>
<div class="c n" style="left:318px;top:305px;width:71px;">0.2</div>
<div class="c n" style="left:390px;top:305px;width:71px;">0.94</div>
<div class="c n" style="left:462px;top:305px;width:71px;">0.0116</div>
<div class="c n" style="left:534px;top:305px;width:71px;">−0.5094</div>
<div class="c n" style="left:606px;top:305px;width:71px;">−0.91</div>
<div class="c n" style="left:678px;top:305px;width:71px;">0.3</div>
<div class="c" style="left:606px;top:269px;width:71px;padding-left:2px;">G3:H5 )</div>
<div class="c n" style="left:606px;top:323px;width:71px;">0.250214</div>
<div class="c n" style="left:678px;top:323px;width:71px;">0</div>
<div class="a" style="left:604px;top:266px;width:147px;height:75px;border:2px solid #217346;"></div>
<div class="a" style="left:746px;top:336px;width:7px;height:7px;background:#217346;border:1px solid #fff;"></div>
<!--/GRID-->

<!--DLG-->
<div class="a" style="left:769px;top:215px;width:478px;height:361px;background:#f0f0f0;border:1px solid #707070;box-shadow:3px 4px 14px rgba(0,0,0,0.38);z-index:10;">
<div class="a" style="left:0px;top:0px;width:476px;height:30px;background:#fff;"></div>
<div class="t" style="left:7.0px;top:7.6px;font-size:14px;color:#111;"><span class="jc" style="width:11.25px">関</span><span class="jc" style="width:11.25px">数</span><span class="jc" style="width:11.25px">の</span><span class="jc" style="width:11.25px">引</span><span class="jc" style="width:11.25px">数</span></div>
<div class="t" style="left:405.5px;top:7.3px;font-size:14px;color:#222;">?</div>
<svg class="a" style="left:448px;top:8px" width="11" height="11" viewBox="0 0 11 11" stroke="#222" stroke-width="1.1"><path d="M0.5 0.5L10.5 10.5M10.5 0.5L0.5 10.5"/></svg>
<div class="a" style="left:7px;top:46px;width:462px;height:125px;border:1px solid #dcdcdc;"></div>
<div class="t" style="left:10px;top:40.0px;font-size:12.5px;color:#111;background:#f0f0f0;padding:0 2px;">WZgesv2</div>
<div class="t" style="left:10px;width:36px;text-align:right;top:68.0px;font-size:12.5px;color:#111;">N</div>
<div class="a" style="left:55px;top:61px;width:177px;height:23px;background:#fff;border:1px solid #adadad;border-right:none;"></div>
<div class="a" style="left:231px;top:61px;width:22px;height:23px;background:#dcdcdc;border:1px solid #adadad;"></div>
<div class="a" style="left:233px;top:65px;width:16px;height:16px;background:#fdfdfd;"></div>
<svg class="a" style="left:236px;top:66px" width="10" height="11" viewBox="0 0 10 11"><path d="M5 0.3L9.5 5H6.5V8H3.5V5H0.5Z" fill="#000"/><rect x="0.5" y="9.2" width="9" height="1.5" fill="#000"/></svg>
<div class="t" style="left:263.0px;top:66.6px;font-size:12px;color:#111;">=</div>
<div class="t" style="left:10px;width:36px;text-align:right;top:95.0px;font-size:12.5px;color:#111;">A</div>
<div class="a" style="left:55px;top:88px;width:177px;height:23px;background:#fff;border:1px solid #adadad;border-right:none;"></div>
<div class="a" style="left:231px;top:88px;width:22px;height:23px;background:#dcdcdc;border:1px solid #adadad;"></div>
<div class="a" style="left:233px;top:92px;width:16px;height:16px;background:#fdfdfd;"></div>
<svg class="a" style="left:236px;top:93px" width="10" height="11" viewBox="0 0 10 11"><path d="M5 0.3L9.5 5H6.5V8H3.5V5H0.5Z" fill="#000"/><rect x="0.5" y="9.2" width="9" height="1.5" fill="#000"/></svg>
<div class="t" style="left:263.0px;top:93.6px;font-size:12px;color:#111;">=</div>
<div class="t" style="left:10px;width:36px;text-align:right;top:122.0px;font-size:12.5px;color:#111;">B</div>
<div class="a" style="left:55px;top:115px;width:177px;height:23px;background:#fff;border:1px solid #adadad;border-right:none;"></div>
<div class="a" style="left:231px;top:115px;width:22px;height:23px;background:#dcdcdc;border:1px solid #adadad;"></div>
<div class="a" style="left:233px;top:119px;width:16px;height:16px;background:#fdfdfd;"></div>
<svg class="a" style="left:236px;top:120px" width="10" height="11" viewBox="0 0 10 11"><path d="M5 0.3L9.5 5H6.5V8H3.5V5H0.5Z" fill="#000"/><rect x="0.5" y="9.2" width="9" height="1.5" fill="#000"/></svg>
<div class="t" style="left:263.0px;top:120.6px;font-size:12px;color:#111;">=</div>
<div class="t" style="left:10px;width:36px;text-align:right;top:149.0px;font-size:12.5px;color:#111;">Nrhs</div>
<div class="a" style="left:55px;top:142px;width:177px;height:23px;background:#fff;border:1px solid #adadad;border-right:none;"></div>
<div class="a" style="left:231px;top:142px;width:22px;height:23px;background:#dcdcdc;border:1px solid #adadad;"></div>
<div class="a" style="left:233px;top:146px;width:16px;height:16px;background:#fdfdfd;"></div>
<svg class="a" style="left:236px;top:147px" width="10" height="11" viewBox="0 0 10 11"><path d="M5 0.3L9.5 5H6.5V8H3.5V5H0.5Z" fill="#000"/><rect x="0.5" y="9.2" width="9" height="1.5" fill="#000"/></svg>
<div class="t" style="left:263.0px;top:147.6px;font-size:12px;color:#111;">=</div>
<div class="a" style="left:58px;top:65px;width:8px;height:14px;background:#c8c8c8;"></div>
<div class="t" style="left:59.0px;top:67.0px;font-size:12px;color:#111;">3</div>
<div class="a" style="left:66px;top:65px;width:1px;height:14px;background:#000;"></div>
<div class="t" style="left:59.0px;top:93.6px;font-size:12px;color:#111;letter-spacing:0.6px;">A3:F5</div>
<div class="t" style="left:59.0px;top:120.6px;font-size:12px;color:#111;letter-spacing:0.6px;">G3:H5</div>
<div class="t" style="left:281.0px;top:67.0px;font-size:12px;color:#111;">3</div>
<div class="t" style="left:281.0px;top:94.1px;font-size:12px;color:#111;letter-spacing:0.62px;">{0.2,-0.11,-0.93,-0.32,0.81,0...</div>
<div class="t" style="left:281.0px;top:121.1px;font-size:12px;color:#111;letter-spacing:0.62px;">{-0.5853,-0.9457;-2.1697,-1....</div>
<div class="t" style="left:263.0px;top:179.6px;font-size:12px;color:#111;">=</div>
<div class="t" style="left:281.0px;top:180.1px;font-size:12px;color:#111;letter-spacing:0.62px;">{0.79,-0.13;0.13,0.75;-0.91,...</div>
<div class="t" style="left:5.0px;top:196.5px;font-size:14px;color:#111;"><span class="jc" style="width:11.85px">連</span><span class="jc" style="width:11.85px">立</span><span class="jc" style="width:11.85px">一</span><span class="jc" style="width:11.85px">次</span><span class="jc" style="width:11.85px">方</span><span class="jc" style="width:11.85px">程</span><span class="jc" style="width:11.85px">式</span></div>
<div class="t" style="left:94.0px;top:198.0px;font-size:12.5px;color:#111;letter-spacing:0.3px;">AX = B</div>
<div class="t" style="left:139.0px;top:196.5px;font-size:14px;color:#111;"><span class="jc" style="width:10.88px">の</span><span class="jc" style="width:10.88px">解</span></div>
<div class="t" style="left:167.0px;top:196.6px;font-size:12px;color:#111;">(</div>
<div class="t" style="left:170.0px;top:196.5px;font-size:14px;color:#111;"><span class="jc" style="width:11.62px">一</span><span class="jc" style="width:11.62px">般</span><span class="jc" style="width:11.62px">複</span><span class="jc" style="width:11.62px">素</span><span class="jc" style="width:11.62px">行</span><span class="jc" style="width:11.62px">列</span></div>
<div class="t" style="left:243.0px;top:196.6px;font-size:12px;color:#111;">)</div>
<div class="t" style="left:252.0px;top:196.6px;font-size:12px;color:#111;">(</div>
<div class="t" style="left:255.0px;top:196.5px;font-size:14px;color:#111;"><span class="jc" style="width:11.62px">実</span><span class="jc" style="width:11.62px">数</span><span class="jc" style="width:11.62px">部</span><span class="jc" style="width:11.62px">／</span><span class="jc" style="width:11.62px">虚</span><span class="jc" style="width:11.62px">数</span><span class="jc" style="width:11.62px">部</span><span class="jc" style="width:11.62px">分</span><span class="jc" style="width:11.62px">離</span><span class="jc" style="width:11.62px">形</span><span class="jc" style="width:11.62px">式</span></div>
<div class="t" style="left:389.0px;top:196.6px;font-size:12px;color:#111;">)</div>
<div class="t" style="left:195.5px;top:225.1px;font-size:12.5px;color:#111;">N</div>
<div class="t" style="left:214.0px;top:224.6px;font-size:12px;color:#111;">:</div>
<div class="t" style="left:222.0px;top:225.1px;font-size:12.5px;color:#111;">A</div>
<div class="t" style="left:229.0px;top:225.0px;font-size:13px;color:#111;"><span class="jc" style="width:10.57px">の</span><span class="jc" style="width:10.57px">行</span><span class="jc" style="width:10.57px">お</span><span class="jc" style="width:10.57px">よ</span><span class="jc" style="width:10.57px">び</span><span class="jc" style="width:10.57px">列</span><span class="jc" style="width:10.57px">数</span></div>
<div class="t" style="left:310.0px;top:225.1px;font-size:12.5px;color:#111;letter-spacing:0.9px;">(&gt;= 1)</div>
<div class="a" style="left:6px;top:282px;width:464px;height:1px;background:#dcdcdc;"></div>
<div class="t" style="left:5.0px;top:298.0px;font-size:14px;color:#111;"><span class="jc" style="width:11.32px">数</span><span class="jc" style="width:11.32px">式</span><span class="jc" style="width:11.32px">の</span><span class="jc" style="width:11.32px">結</span><span class="jc" style="width:11.32px">果</span></div>
<div class="t" style="left:69.0px;top:299.6px;font-size:12px;color:#111;">=</div>
<div class="t" style="left:87.0px;top:299.1px;font-size:12px;color:#111;letter-spacing:0.5px;">0.79</div>
<div class="t" style="left:5.0px;top:330.5px;font-size:13px;color:#0066cc;"><span class="jc" style="width:10.12px">こ</span><span class="jc" style="width:10.12px">の</span><span class="jc" style="width:10.12px">関</span><span class="jc" style="width:10.12px">数</span><span class="jc" style="width:10.12px">の</span><span class="jc" style="width:10.12px">ヘ</span><span class="jc" style="width:10.12px">ル</span><span class="jc" style="width:10.12px">プ</span></div>
<div class="t" style="left:87.5px;top:332.1px;font-size:12px;color:#0066cc;letter-spacing:0.3px;">(H)</div>
<div class="a" style="left:6px;top:343px;width:100px;height:1px;background:#0066cc;"></div>
<div class="a" style="left:311px;top:325px;width:74px;height:25px;background:#e5f1fb;border:1px solid #0078d7;box-shadow:inset 0 0 0 1px #3c96e0;"></div>
<div class="t" style="left:338.5px;top:332.5px;font-size:12.5px;color:#111;">OK</div>
<div class="a" style="left:395px;top:325px;width:74px;height:25px;background:#e1e1e1;border:1px solid #adadad;"></div>
<div class="t" style="left:407.0px;top:332.2px;font-size:12.5px;color:#111;"><span class="jc" style="width:9.38px">キ</span><span class="jc" style="width:9.38px">ャ</span><span class="jc" style="width:9.38px">ン</span><span class="jc" style="width:9.38px">セ</span><span class="jc" style="width:9.38px">ル</span></div>
</div>
<!--/DLG-->
</body></html>
